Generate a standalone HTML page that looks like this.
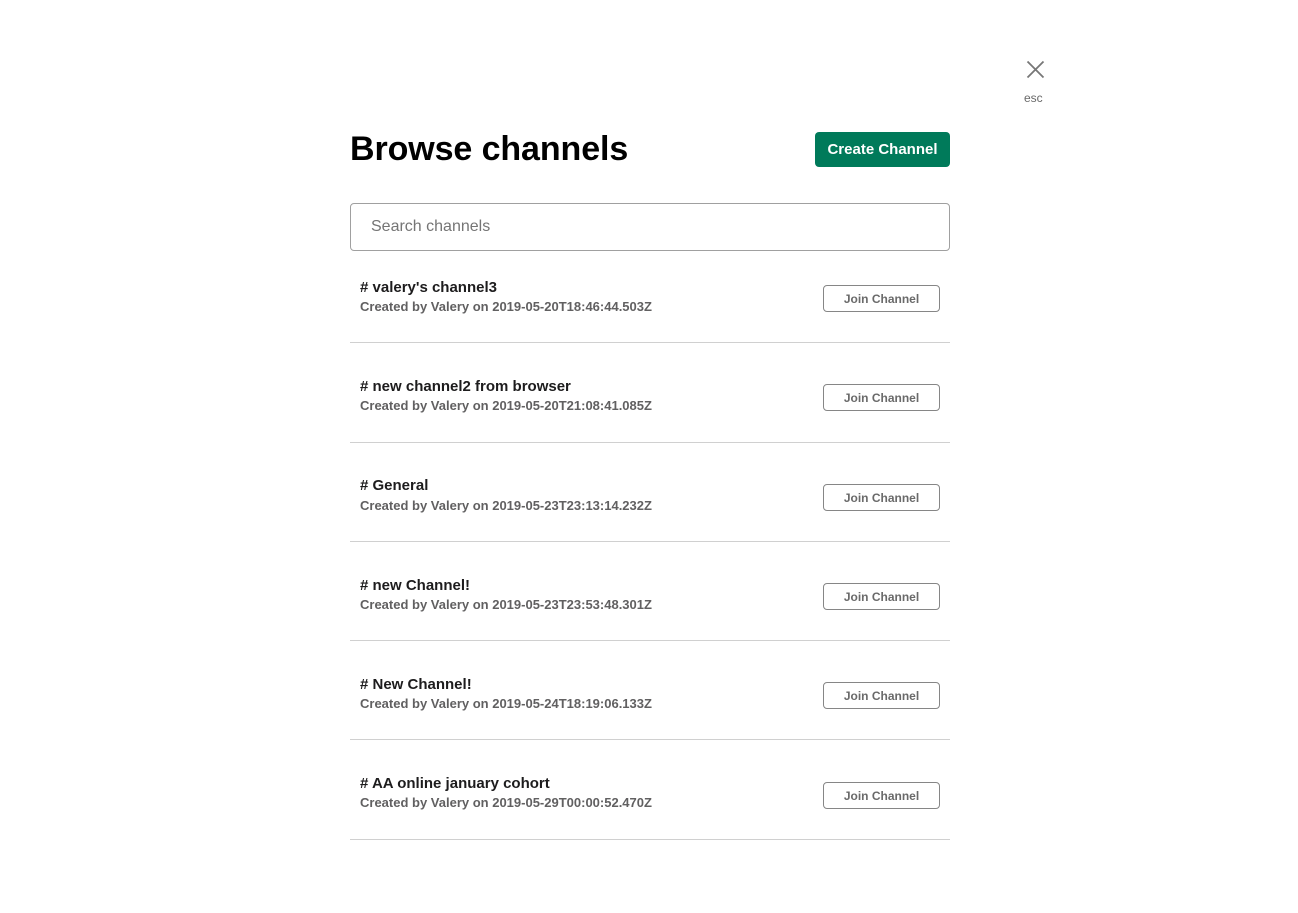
<!DOCTYPE html>
<html><head><style>
body{margin:0;background:#fff;font-family:"Liberation Sans",sans-serif;width:1298px;height:913px;position:relative;overflow:hidden}
.abs{position:absolute}
h1{position:absolute;left:350px;top:129px;margin:0;font-size:34px;font-weight:bold;color:#000;line-height:40px;letter-spacing:-0.1px}
.create{left:815px;top:132px;width:135px;height:35px;background:#007a5a;color:#fff;border-radius:4px;font-weight:bold;font-size:15px;line-height:36px;text-align:center}
.search{left:350px;top:203px;width:598px;height:46px;border:1px solid #a0a0a0;border-radius:4px;font-size:16px;color:#757575;line-height:46px;text-indent:20px}
.row{left:350px;width:600px;height:99px;border-bottom:1px solid #d0d0d0;box-sizing:border-box}
.t{position:absolute;left:10px;font-size:15px;font-weight:bold;color:#1d1c1d}
.s{position:absolute;left:10px;font-size:13px;font-weight:bold;color:#616061}
.b{position:absolute;left:473px;width:115px;height:25px;border:1px solid #868686;border-radius:4px;font-size:12px;font-weight:bold;color:#6a6a6a;text-align:center;line-height:27px}
</style></head><body>
<svg class="abs" style="left:1026px;top:60px" width="19" height="19" viewBox="0 0 19 19"><path d="M1.5 1.5L17.5 17.5M17.5 1.5L1.5 17.5" stroke="#777" stroke-width="1.8"/></svg>
<div class="abs" style="left:1024px;top:91px;font-size:12px;color:#6a6a6a">esc</div>
<h1>Browse channels</h1>
<div class="abs create">Create Channel</div>
<div class="abs search">Search channels</div>

<div class="abs row" style="top:244px;height:99px"><div class="t" style="top:35px"># valery's channel3</div><div class="s" style="top:55px">Created by Valery on 2019-05-20T18:46:44.503Z</div><div class="b" style="top:41px">Join Channel</div></div>
<div class="abs row" style="top:343px;height:100px"><div class="t" style="top:35px"># new channel2 from browser</div><div class="s" style="top:55px">Created by Valery on 2019-05-20T21:08:41.085Z</div><div class="b" style="top:41px">Join Channel</div></div>
<div class="abs row" style="top:443px"><div class="t" style="top:34px"># General</div><div class="s" style="top:55px">Created by Valery on 2019-05-23T23:13:14.232Z</div><div class="b" style="top:41px">Join Channel</div></div>
<div class="abs row" style="top:542px"><div class="t" style="top:35px"># new Channel!</div><div class="s" style="top:55px">Created by Valery on 2019-05-23T23:53:48.301Z</div><div class="b" style="top:41px">Join Channel</div></div>
<div class="abs row" style="top:641px"><div class="t" style="top:35px"># New Channel!</div><div class="s" style="top:55px">Created by Valery on 2019-05-24T18:19:06.133Z</div><div class="b" style="top:41px">Join Channel</div></div>
<div class="abs row" style="top:740px;height:100px"><div class="t" style="top:35px"># AA online january cohort</div><div class="s" style="top:55px">Created by Valery on 2019-05-29T00:00:52.470Z</div><div class="b" style="top:42px">Join Channel</div></div>
</body></html>
